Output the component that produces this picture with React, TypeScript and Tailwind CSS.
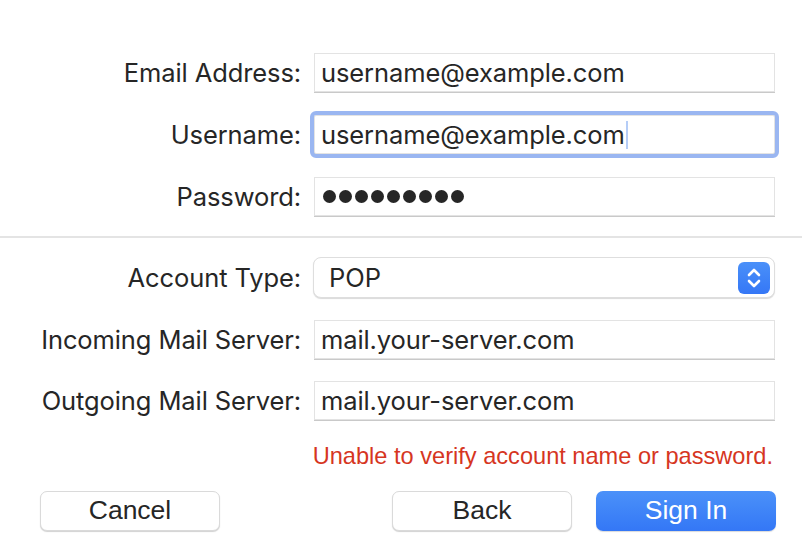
import { ReactNode } from 'react'

const SANS = "font-['Inter','Liberation_Sans',sans-serif]"

function Label({ children }: { children: ReactNode }) {
  return (
    <div className={`${SANS} text-right text-[25.5px] tracking-[-0.1px] text-[#262626] leading-none`}>
      {children}
    </div>
  )
}

function Field({ value, focused }: { value: string; focused?: boolean }) {
  return (
    <div
      className={`h-[39px] flex items-center px-[6px] bg-white border border-[#e3e3e3] shadow-[0_1px_0_#c9c9c9] ${
        focused ? 'outline-[4px] outline outline-[#9ab6f1] rounded-[2px]' : ''
      }`}
    >
      <span className={`${SANS} text-[25.5px] tracking-[-0.1px] text-[#262626] leading-none`}>{value}</span>
      {focused && <span className="ml-[1px] w-[2px] h-[28px] bg-[#b5cdf7]" />}
    </div>
  )
}

function Dots({ count }: { count: number }) {
  return (
    <div className="h-[39px] flex items-center gap-[3px] px-[8px] bg-white border border-[#e3e3e3] shadow-[0_1px_0_#c9c9c9]">
      {Array.from({ length: count }).map((_, i) => (
        <span key={i} className="w-[13px] h-[13px] rounded-full bg-[#262626]" />
      ))}
    </div>
  )
}

function Stepper() {
  return (
    <div className="w-[32px] h-[32px] rounded-[6px] bg-gradient-to-b from-[#4a90f9] to-[#3577f6] flex items-center justify-center">
      <svg width="18" height="24" viewBox="0 0 18 24" fill="none" stroke="white" strokeWidth="2.6" strokeLinecap="round" strokeLinejoin="round">
        <path d="M4 9 L9 4 L14 9" />
        <path d="M4 15 L9 20 L14 15" />
      </svg>
    </div>
  )
}

function Button({ children, primary }: { children: ReactNode; primary?: boolean }) {
  return (
    <button
      className={`w-[180px] h-[40px] rounded-[7px] flex items-center justify-center font-['Liberation_Sans',sans-serif] text-[26.5px] leading-none ${
        primary
          ? 'bg-gradient-to-b from-[#4b91f9] to-[#3477f6] text-white shadow-[0_1px_1px_rgba(0,0,0,0.15)]'
          : 'bg-white text-[#262626] border border-[#dadada] shadow-[0_1px_1px_rgba(0,0,0,0.18)]'
      }`}
    >
      {children}
    </button>
  )
}

export default function App() {
  return (
    <div className="w-[802px] h-[552px] bg-white overflow-hidden flex flex-col">
      <div className="grid grid-cols-[301px_1fr] gap-x-[13px] gap-y-[23px] items-center pt-[53px] pr-[27px]">
        <Label>Email Address:</Label>
        <Field value="username@example.com" />
        <Label>Username:</Label>
        <Field value="username@example.com" focused />
        <Label>Password:</Label>
        <Dots count={9} />
      </div>

      <div className="mt-[20px] h-[2px] bg-[#e4e4e4]" />

      <div className="grid grid-cols-[301px_1fr] gap-x-[13px] gap-y-[22px] items-center pt-[19px] pr-[27px]">
        <Label>Account Type:</Label>
        <div className="-ml-[1px] h-[41px] flex items-center justify-between pl-[15px] pr-[4px] bg-white rounded-[8px] border border-[#dedede] shadow-[0_1px_1px_rgba(0,0,0,0.15)]">
          <span className={`${SANS} text-[25.5px] text-[#262626] leading-none`}>POP</span>
          <Stepper />
        </div>
        <Label>Incoming Mail Server:</Label>
        <Field value="mail.your-server.com" />
        <Label>Outgoing Mail Server:</Label>
        <Field value="mail.your-server.com" />
      </div>

      <div className="mt-[25px] pr-[29px] text-right font-['Liberation_Sans',sans-serif] text-[23.6px] leading-none text-[#d6361f]">
        Unable to verify account name or password.
      </div>

      <div className="mt-[22px] flex items-center pl-[40px] pr-[26px]">
        <Button>Cancel</Button>
        <div className="flex-1" />
        <Button>Back</Button>
        <div className="w-[24px]" />
        <Button primary>Sign In</Button>
      </div>
    </div>
  )
}
